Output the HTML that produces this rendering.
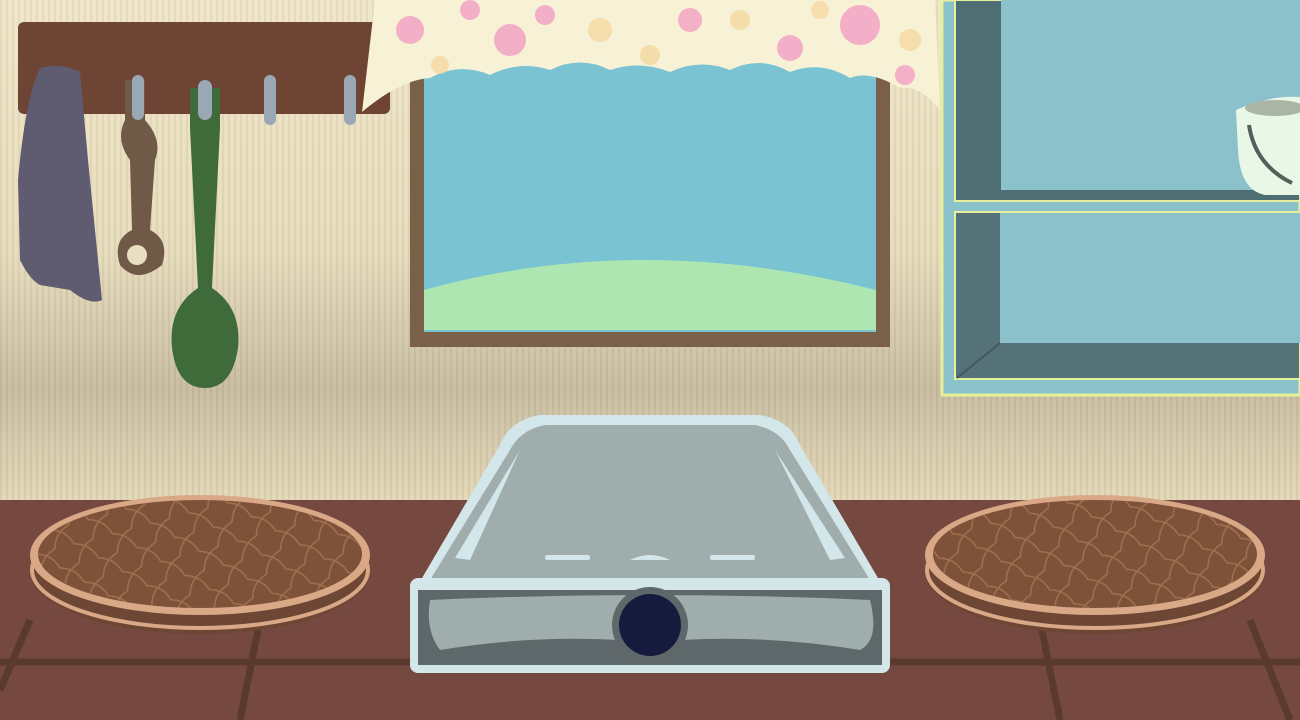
<!DOCTYPE html>
<html><head><meta charset="utf-8"><style>html,body{margin:0;padding:0;width:1300px;height:720px;overflow:hidden;background:#efe6c8}</style></head>
<body>
<svg width="1300" height="720" viewBox="0 0 1300 720" xmlns="http://www.w3.org/2000/svg">
<defs>
<linearGradient id="wall" x1="0" y1="0" x2="0" y2="1">
<stop offset="0" stop-color="#f0e7c8"/><stop offset="0.5" stop-color="#e8ddbd"/><stop offset="0.78" stop-color="#c9bea2"/><stop offset="0.9" stop-color="#d8cdae"/><stop offset="1" stop-color="#e4d9b8"/>
</linearGradient>
<pattern id="tex" width="6" height="6" patternUnits="userSpaceOnUse"><rect width="2" height="6" fill="#000" opacity="0.05"/></pattern>
<pattern id="weave" width="28" height="28" patternUnits="userSpaceOnUse" patternTransform="rotate(30)"><path d="M0 14 Q14 6 28 14 M14 0 Q6 14 14 28" stroke="#b07e5a" stroke-width="1.5" fill="none" opacity="0.7"/></pattern>
</defs>
<rect width="1300" height="500" fill="url(#wall)"/>
<rect width="1300" height="500" fill="url(#tex)"/>
<!-- counter -->
<rect y="500" width="1300" height="220" fill="#754840"/>
<g stroke="#5a3a2c" stroke-width="7">
<line x1="0" y1="662" x2="1300" y2="662"/>
<line x1="258" y1="630" x2="240" y2="720"/>
<line x1="1042" y1="630" x2="1060" y2="720"/>
<line x1="1250" y1="620" x2="1290" y2="720"/>
<line x1="30" y1="620" x2="0" y2="690"/>
</g>
<!-- rack -->
<rect x="18" y="22" width="372" height="92" rx="6" fill="#6e4535"/>
<path d="M40 68 Q60 62 80 72 L88 160 L102 300 Q90 306 70 290 L40 285 Q30 280 20 260 L18 180 Q25 100 40 68Z" fill="#5f5b70"/>
<path d="M125 80 h20 v40 q18 20 10 40 l-5 70 q20 10 12 35 q-25 20 -42 0 q-8 -25 12 -35 l-2 -70 q-15 -20 -5 -40Z" fill="#6f5a48"/>
<circle cx="137" cy="255" r="10" fill="#e9dfc0"/>
<path d="M190 88 h30 v40 l-8 160 q30 20 26 60 q-6 40 -33 40 q-28 0 -33 -40 q-4 -40 26 -60 l-8 -160Z" fill="#3f6b3a"/>
<rect x="198" y="80" width="14" height="40" rx="7" fill="#9aa7b5"/>
<rect x="132" y="75" width="12" height="45" rx="6" fill="#9aa7b5"/>
<rect x="264" y="75" width="12" height="50" rx="6" fill="#9aa7b5"/>
<rect x="344" y="75" width="12" height="50" rx="6" fill="#9aa7b5"/>
<!-- window -->
<rect x="410" y="55" width="480" height="292" fill="#7a6048"/>
<rect x="424" y="60" width="452" height="272" fill="#79c3d2"/>
<path d="M424 290 Q640 230 876 290 L876 330 L424 330Z" fill="#aee6b2"/>
<!-- curtain -->
<path d="M375 0 L935 0 L940 110 Q920 85 900 88 Q870 70 850 78 Q820 60 790 72 Q760 55 730 70 Q700 58 670 72 Q640 60 610 70 Q580 55 550 70 Q520 60 490 75 Q460 62 430 78 Q400 80 362 112 Z" fill="#f7f1d6"/>
<g fill="#f29ac2" opacity="0.75">
<circle cx="410" cy="30" r="14"/><circle cx="510" cy="40" r="16"/><circle cx="545" cy="15" r="10"/><circle cx="690" cy="20" r="12"/><circle cx="790" cy="48" r="13"/><circle cx="860" cy="25" r="20"/><circle cx="905" cy="75" r="10"/><circle cx="470" cy="10" r="10"/>
</g>
<g fill="#f5d49a" opacity="0.7">
<circle cx="600" cy="30" r="12"/><circle cx="650" cy="55" r="10"/><circle cx="740" cy="20" r="10"/><circle cx="440" cy="65" r="9"/><circle cx="910" cy="40" r="11"/><circle cx="820" cy="10" r="9"/>
</g>
<!-- cabinet -->
<rect x="942" y="0" width="358" height="395" fill="#8bc1cb" stroke="#e6f09a" stroke-width="3"/>
<rect x="955" y="0" width="345" height="201" fill="#4f6e74" stroke="#e6f09a" stroke-width="2"/>
<rect x="1001" y="0" width="299" height="190" fill="#8bc1cb"/>
<rect x="955" y="212" width="345" height="167" fill="#547278" stroke="#e6f09a" stroke-width="2"/>
<rect x="1000" y="213" width="300" height="130" fill="#8bc1cb"/>
<line x1="1000" y1="343" x2="957" y2="378" stroke="#3f5a60" stroke-width="2"/>
<!-- cup -->
<path d="M1236 110 Q1270 95 1300 97 L1300 195 L1265 195 Q1240 190 1238 150Z" fill="#e9f7e6"/>
<ellipse cx="1275" cy="108" rx="30" ry="8" fill="#aab5a6"/>
<path d="M1249 125 Q1255 165 1292 183" stroke="#555e58" stroke-width="4" fill="none"/>
<!-- baskets -->
<g>
<ellipse cx="200" cy="572" rx="170" ry="62" fill="#6e4634"/>
<ellipse cx="200" cy="570" rx="168" ry="58" fill="none" stroke="#d9a886" stroke-width="4"/>
<ellipse cx="200" cy="555" rx="170" ry="60" fill="#d9a886"/>
<ellipse cx="200" cy="554" rx="162" ry="54" fill="#7d5238"/>
<ellipse cx="200" cy="554" rx="162" ry="54" fill="url(#weave)"/>
<ellipse cx="1095" cy="572" rx="170" ry="62" fill="#6e4634"/>
<ellipse cx="1095" cy="570" rx="168" ry="58" fill="none" stroke="#d9a886" stroke-width="4"/>
<ellipse cx="1095" cy="555" rx="170" ry="60" fill="#d9a886"/>
<ellipse cx="1095" cy="554" rx="162" ry="54" fill="#7d5238"/>
<ellipse cx="1095" cy="554" rx="162" ry="54" fill="url(#weave)"/>
</g>
<!-- stove -->
<path d="M540 415 L760 415 Q790 420 800 445 L885 590 L415 590 L500 445 Q510 420 540 415Z" fill="#d3e6ea"/>
<path d="M545 425 L755 425 Q780 430 790 450 L870 580 L430 580 L510 450 Q520 430 545 425Z" fill="#9fadad"/>
<path d="M455 558 L520 450 L470 560Z" fill="#d3e6ea"/>
<path d="M845 558 L775 450 L830 560Z" fill="#d3e6ea"/>
<rect x="545" y="555" width="45" height="5" rx="2" fill="#d3e6ea"/>
<rect x="710" y="555" width="45" height="5" rx="2" fill="#d3e6ea"/>
<path d="M630 560 Q650 550 670 560Z" fill="#d3e6ea"/>
<rect x="410" y="578" width="480" height="95" rx="8" fill="#d3e6ea"/>
<rect x="418" y="590" width="464" height="75" fill="#5e6769"/>
<path d="M430 600 Q650 590 870 600 Q880 640 860 650 Q770 635 680 640 L620 640 Q530 635 440 650 Q425 630 430 600Z" fill="#9fadad"/>
<circle cx="650" cy="625" r="38" fill="#5e6769"/>
<circle cx="650" cy="625" r="31" fill="#161b3d"/>
</svg>
</body></html>
